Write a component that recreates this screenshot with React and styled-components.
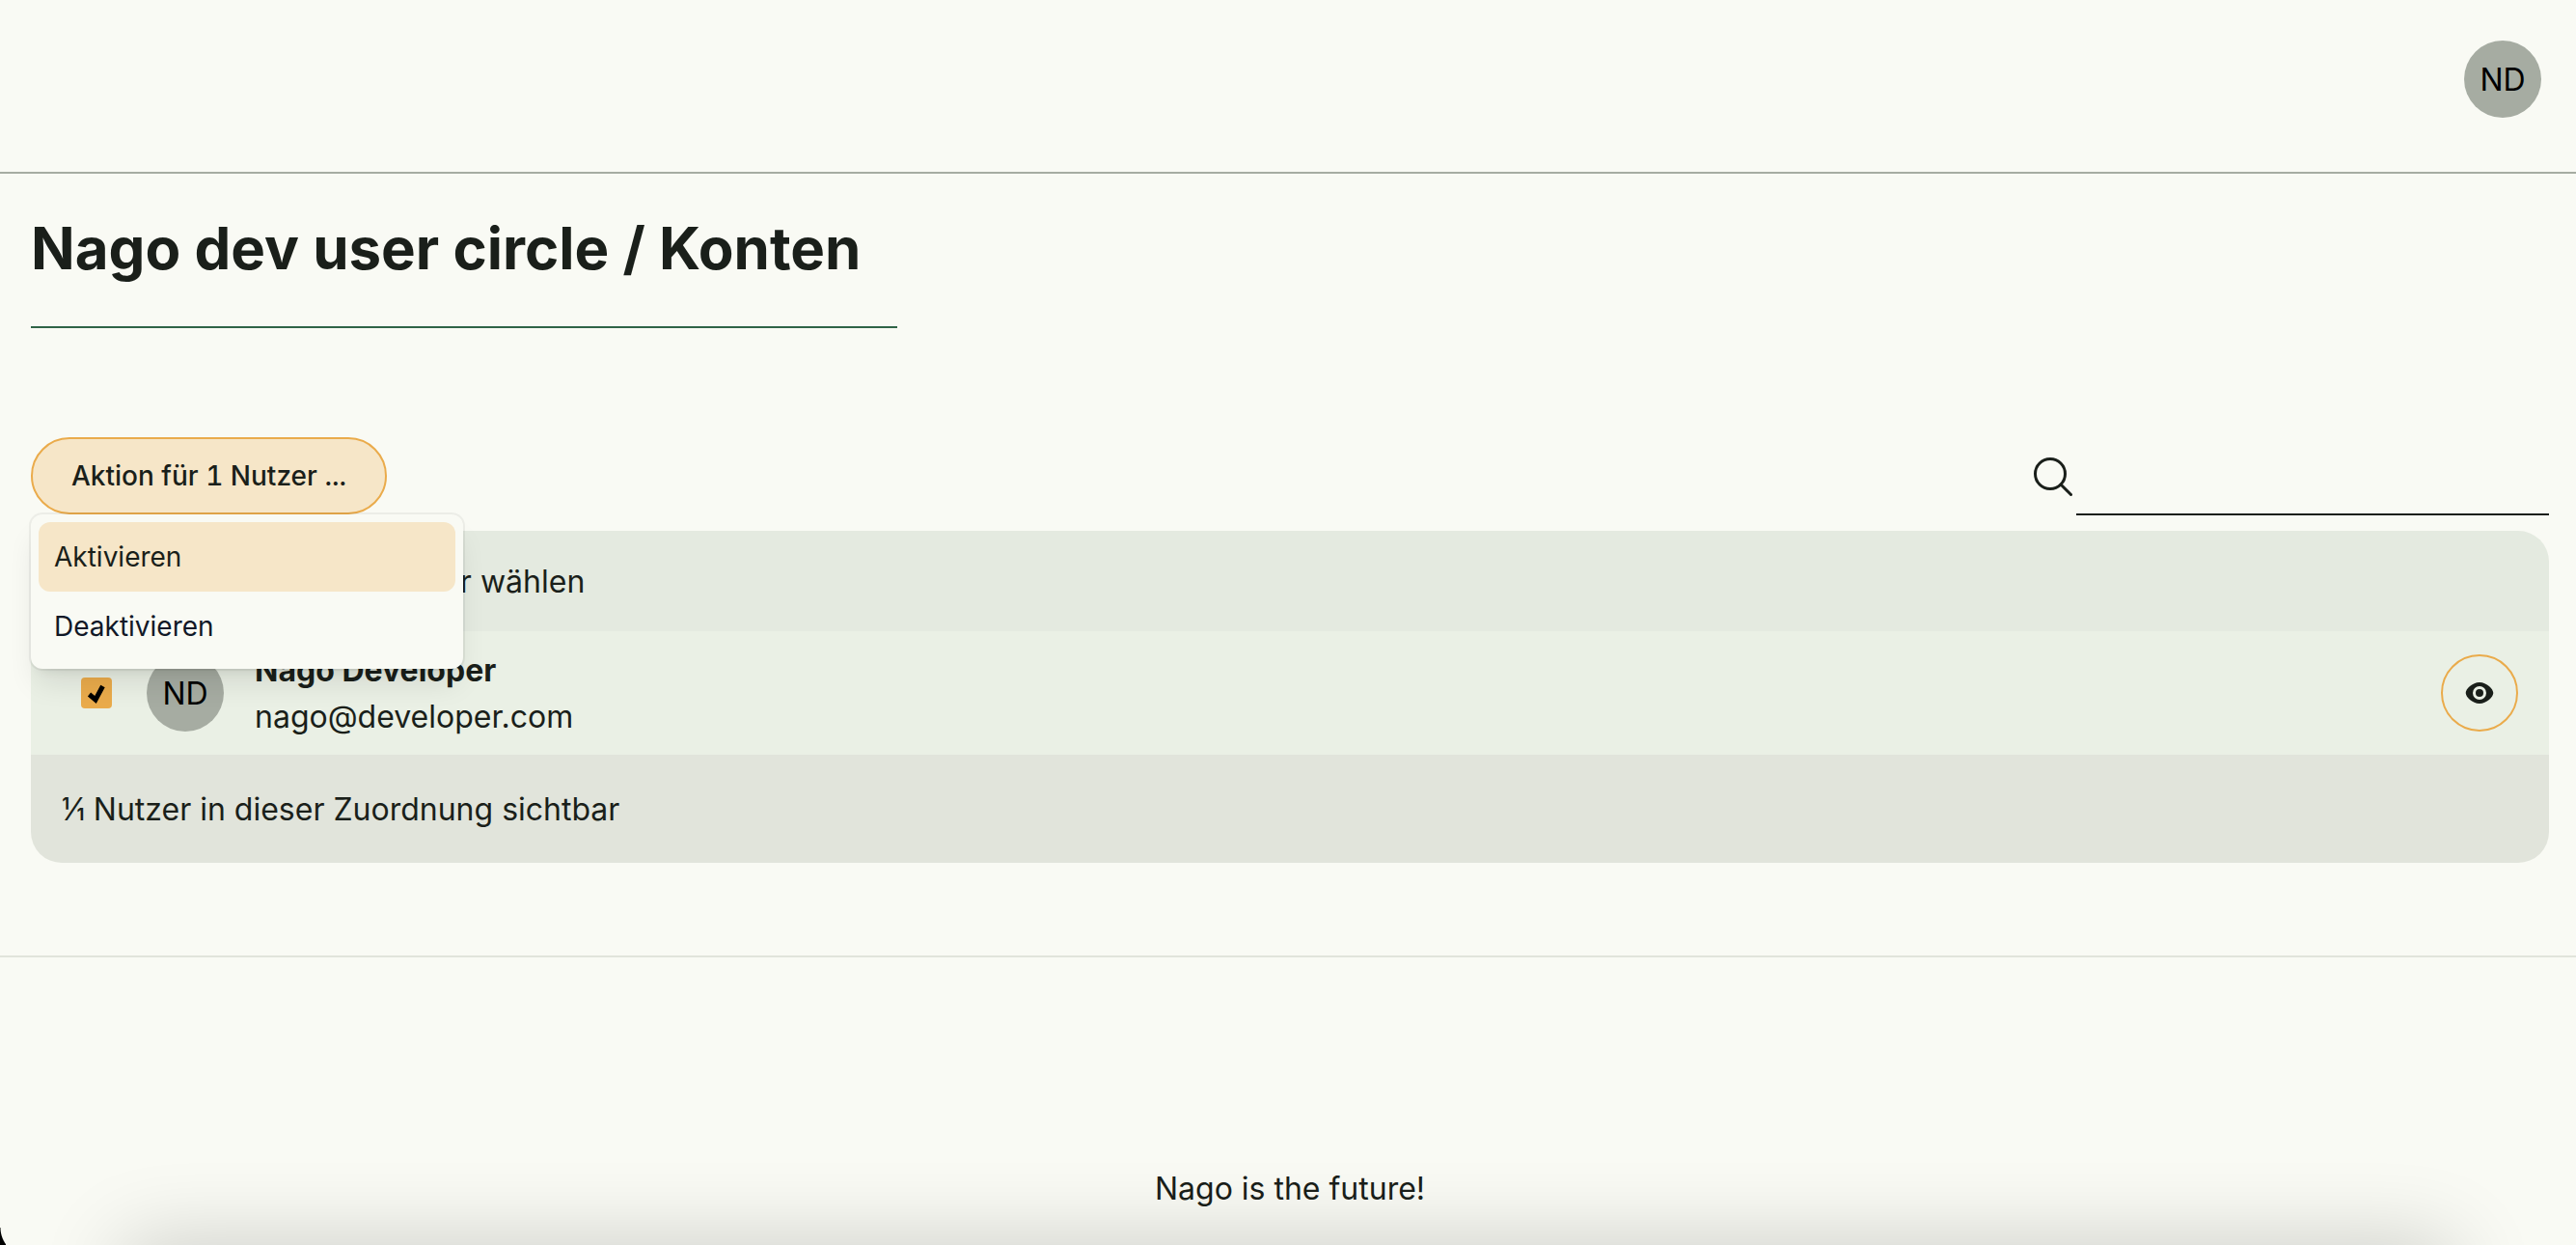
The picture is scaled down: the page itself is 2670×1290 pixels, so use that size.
import React, { useState } from "react";
import styled, { createGlobalStyle } from "styled-components";

const color = {
  page: "#f9faf4",
  text: "#1a1f1a",
  line: "#a6aca2",
  accent: "#eaab4b",
  accentSoft: "#f6e6c8",
  primary: "#2f6446",
  head: "#e4eae0",
  row: "#eaf0e5",
  foot: "#e1e4db",
};

const GlobalStyle = createGlobalStyle`
  *, *::before, *::after { box-sizing: border-box; }
  body {
    margin: 0;
    background: ${color.page};
    color: ${color.text};
    font-family: Inter, "Liberation Sans", sans-serif;
    font-size: 32px;
    line-height: 48px;
  }
  button, input { font: inherit; color: inherit; }
`;

const Page = styled.div`
  display: flex;
  flex-direction: column;
  min-height: 100vh;
  position: relative;
  overflow: hidden;
`;

const Header = styled.header`
  display: flex;
  justify-content: flex-end;
  padding: 42px 36px 56px;
  border-bottom: 2px solid ${color.line};
`;

const Avatar = styled.span`
  display: flex;
  align-items: center;
  justify-content: center;
  flex: none;
  width: 80px;
  height: 80px;
  padding-top: 2px;
  border-radius: 50%;
  background: ${color.line};
  color: #000;
`;

const Main = styled.main`
  display: flex;
  flex-direction: column;
  align-items: stretch;
  padding: 38px 28px 96px 32px;
`;

const Title = styled.h1`
  align-self: flex-start;
  margin: 0;
  padding: 0 38px 42px 0;
  border-bottom: 2px solid ${color.primary};
  font-size: 60px;
  line-height: 78px;
  font-weight: 700;
`;

const Toolbar = styled.div`
  display: flex;
  justify-content: space-between;
  align-items: center;
  padding: 112px 0 16px;
`;

const MenuAnchor = styled.div`
  position: relative;
`;

const ActionButton = styled.button`
  display: block;
  height: 80px;
  padding: 0 40px;
  border: 2px solid ${color.accent};
  border-radius: 40px;
  background: ${color.accentSoft};
  font-size: 28px;
  line-height: 40px;
  font-weight: 500;
  font-variant-numeric: tabular-nums;
`;

const Menu = styled.div`
  position: absolute;
  top: 100%;
  left: 0;
  z-index: 2;
  width: 448px;
  padding: 8px;
  border-radius: 12px;
  background: ${color.page};
  box-shadow: 0 0 0 2px rgba(0, 0, 0, 0.05), 0 20px 30px -6px rgba(0, 0, 0, 0.1),
    0 8px 12px -8px rgba(0, 0, 0, 0.1);
`;

const MenuItem = styled.button`
  display: block;
  width: 100%;
  padding: 16px;
  border: 0;
  border-radius: 12px;
  background: ${(p) => (p.$active ? color.accentSoft : "transparent")};
  color: ${(p) => (p.$active ? color.text : "#111827")};
  font-size: 28px;
  line-height: 40px;
  text-align: left;
`;

const Search = styled.label`
  display: flex;
  align-items: center;
  gap: 4px;
  height: 82px;
`;

const SearchInput = styled.input`
  width: 490px;
  height: 82px;
  padding: 0 16px;
  border: 0;
  border-bottom: 2px solid ${color.text};
  background: transparent;
  outline: none;
`;

const Table = styled.table`
  width: 100%;
  border-spacing: 0;
  border-radius: 32px;
  overflow: hidden;
`;

const Row = styled.tr`
  height: ${(p) => p.$height};
  background: ${(p) => p.$fill};
`;

const Cell = styled.td`
  padding: 0;
`;

const FootCell = styled.td`
  padding: 2px 32px 0;
`;

const ActionCell = styled.td`
  padding: 0 32px 0 0;
  text-align: right;
`;

const CheckCell = styled.td`
  width: 120px;
  padding: 0 0 0 52px;
`;

const CheckLabel = styled.label`
  display: flex;
  align-items: center;
  gap: 38px;
  padding-top: 2px;
  font-weight: 400;
`;

const Checkbox = styled.input`
  appearance: none;
  display: block;
  flex: none;
  width: 32px;
  height: 32px;
  margin: 0;
  border: ${(p) => (p.checked ? "0" : `2px solid ${color.accent}`)};
  border-radius: 4px;
  background: ${(p) =>
    p.checked
      ? `${color.accent} url("data:image/svg+xml,%3Csvg xmlns='http://www.w3.org/2000/svg' viewBox='0 0 32 32'%3E%3Cpath d='M8.5 17.5 15 23 22.500 9' fill='none' stroke='%23000' stroke-width='5'/%3E%3C/svg%3E") center / 100%`
      : "transparent"};
`;

const User = styled.div`
  display: flex;
  align-items: center;
  gap: 32px;
`;

const UserText = styled.div`
  padding-top: 2px;
`;

const UserName = styled.div`
  font-weight: 700;
`;

const ViewButton = styled.button`
  display: inline-flex;
  align-items: center;
  justify-content: center;
  vertical-align: middle;
  width: 80px;
  height: 80px;
  padding: 0;
  border: 2px solid ${color.accent};
  border-radius: 50%;
  background: transparent;
`;

const Fraction = styled.span`
  font-feature-settings: "frac" 1;
`;

const Footer = styled.footer`
  display: flex;
  justify-content: center;
  padding: 216px 28px 34px 32px;
  border-top: 2px solid ${color.foot};
`;

const BottomShade = styled.div`
  position: absolute;
  left: 128px;
  right: 128px;
  top: 100%;
  height: 80px;
  box-shadow: 0 0 88px rgba(0, 0, 0, 0.2);
  pointer-events: none;
`;

const WindowCorner = styled.div`
  position: absolute;
  left: 0;
  bottom: 0;
  width: 6px;
  height: 18px;
  background: radial-gradient(circle at 30px 0, transparent 29px, #000 30px);
`;

const SearchIcon = () => (
  <svg width="44" height="44" viewBox="0 0 44 44" fill="none" stroke="currentColor" strokeWidth="3" strokeLinecap="round" aria-hidden="true">
    <circle cx="21" cy="20" r="15.500" />
    <path d="M32 31 42.500 41.500" />
  </svg>
);

const EyeIcon = () => (
  <svg width="32" height="32" viewBox="0 0 32 32" aria-hidden="true">
    <path
      fill="currentColor"
      fillRule="evenodd"
      d="M16 5C8.500 5 1.700 12 1.700 16s6.800 11 14.300 11 14.300-7 14.300-11S23.500 5 16 5Zm0 4a7 7 0 1 1 0 14 7 7 0 0 1 0-14Z"
    />
    <circle cx="16" cy="16" r="4" fill="currentColor" />
  </svg>
);

export default function App() {
  const [selected, setSelected] = useState(true);
  const [all, setAll] = useState(true);
  return (
    <Page>
      <GlobalStyle />
      <Header>
        <Avatar>ND</Avatar>
      </Header>
      <Main>
        <Title>Nago dev user circle / Konten</Title>
        <Toolbar>
          <MenuAnchor>
            <ActionButton type="button" aria-haspopup="menu" aria-expanded="true">
              Aktion für 1 Nutzer ...
            </ActionButton>
            <Menu role="menu">
              <MenuItem type="button" role="menuitem" $active>Aktivieren</MenuItem>
              <MenuItem type="button" role="menuitem">Deaktivieren</MenuItem>
            </Menu>
          </MenuAnchor>
          <Search>
            <SearchIcon />
            <SearchInput type="search" aria-label="Suchen" />
          </Search>
        </Toolbar>
        <Table>
          <thead>
            <Row $height="104px" $fill={color.head}>
              <CheckCell as="th" colSpan={3}>
                <CheckLabel>
                  <Checkbox type="checkbox" checked={all} onChange={() => setAll(!all)} />
                  Alle sichtbaren Nutzer wählen
                </CheckLabel>
              </CheckCell>
            </Row>
          </thead>
          <tbody>
            <Row $height="128px" $fill={color.row}>
              <CheckCell>
                <Checkbox type="checkbox" aria-label="Nago Developer" checked={selected} onChange={() => setSelected(!selected)} />
              </CheckCell>
              <Cell>
                <User>
                  <Avatar>ND</Avatar>
                  <UserText>
                    <UserName>Nago Developer</UserName>
                    <div>nago@developer.com</div>
                  </UserText>
                </User>
              </Cell>
              <ActionCell>
                <ViewButton type="button" aria-label="Anzeigen">
                  <EyeIcon />
                </ViewButton>
              </ActionCell>
            </Row>
          </tbody>
          <tfoot>
            <Row $height="112px" $fill={color.foot}>
              <FootCell colSpan={3}>
                <Fraction>1/1</Fraction> Nutzer in dieser Zuordnung sichtbar
              </FootCell>
            </Row>
          </tfoot>
        </Table>
      </Main>
      <Footer>Nago is the future!</Footer>
      <BottomShade />
      <WindowCorner />
    </Page>
  );
}
